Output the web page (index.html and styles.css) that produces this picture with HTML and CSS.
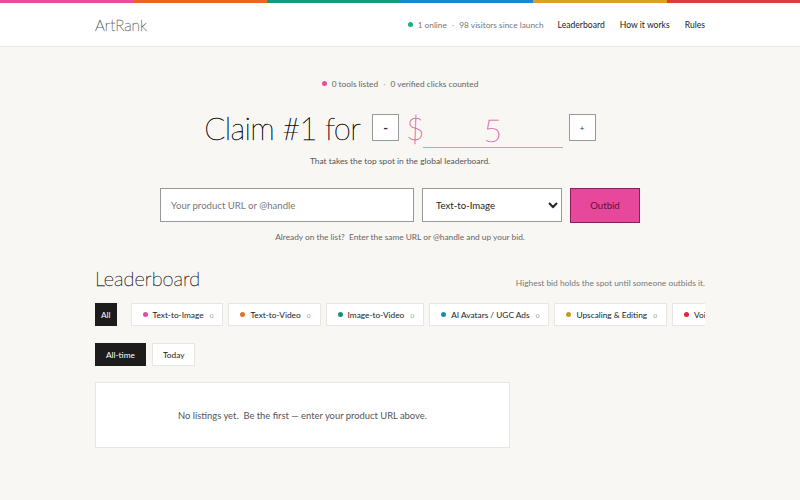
FILE: index.html
```html
<!DOCTYPE html>
<html lang="en">
<head>
    <meta charset="UTF-8">
    <meta name="viewport" content="width=device-width, initial-scale=1.0">
    <title>ArtRank</title>
    <link rel="stylesheet" href="styles.css">
</head>
<body>
    <div class="rainbow">
        <span class="c-pink"></span>
        <span class="c-orange"></span>
        <span class="c-teal"></span>
        <span class="c-blue"></span>
        <span class="c-gold"></span>
        <span class="c-red"></span>
    </div>

    <header>
        <div class="wrap header-inner">
            <div class="logo">ArtRank</div>
            <nav>
                <span class="presence"><i class="dot dot-green"></i>1 online <span class="sep">·</span> 98 visitors since launch</span>
                <a href="#">Leaderboard</a>
                <a href="#">How it works</a>
                <a href="#">Rules</a>
            </nav>
        </div>
    </header>

    <main class="wrap">
        <section class="hero">
            <p class="stats"><i class="dot dot-pink"></i>0 tools listed <span class="sep">·</span> 0 verified clicks counted</p>

            <div class="claim">
                <h1>Claim #1 for</h1>
                <button class="step">-</button>
                <span class="dollar">$</span>
                <input type="text" class="amount" value="5">
                <button class="step step-plus">+</button>
            </div>
            <p class="sub">That takes the top spot in the global leaderboard.</p>

            <form class="bid-form" onsubmit="return false">
                <input type="text" class="url-input" placeholder="Your product URL or @handle">
                <select class="cat-select">
                    <option selected>Text-to-Image</option>
                    <option>Text-to-Video</option>
                    <option>Image-to-Video</option>
                </select>
                <button class="outbid">Outbid</button>
            </form>
            <p class="hint">Already on the list?&nbsp; Enter the same URL or @handle and up your bid.</p>
        </section>

        <section class="board">
            <div class="board-head">
                <h2>Leaderboard</h2>
                <span class="board-note">Highest bid holds the spot until someone outbids it.</span>
            </div>

            <div class="chips">
                <button class="chip chip-all active">All</button>
                <button class="chip"><i class="dot dot-pink"></i>Text-to-Image <small>0</small></button>
                <button class="chip"><i class="dot dot-orange"></i>Text-to-Video <small>0</small></button>
                <button class="chip"><i class="dot dot-teal"></i>Image-to-Video <small>0</small></button>
                <button class="chip"><i class="dot dot-cyan"></i>AI Avatars / UGC Ads <small>0</small></button>
                <button class="chip"><i class="dot dot-gold"></i>Upscaling &amp; Editing <small>0</small></button>
                <button class="chip"><i class="dot dot-red"></i>Voice <small>0</small></button>
            </div>

            <div class="periods">
                <button class="chip active">All-time</button>
                <button class="chip">Today</button>
            </div>

            <div class="empty">No listings yet.&nbsp; Be the first — enter your product URL above.</div>
        </section>
    </main>
</body>
</html>
```

FILE: styles.css
```css
body {
    font-family: Lato, "Noto Sans", sans-serif;
    margin: 0;
    padding: 0;
    background-color: #f8f7f4;
    color: #222;
}

.wrap {
    width: 610px;
    margin: 0 auto;
}

/* полоска сверху */
.rainbow {
    display: flex;
    height: 3px;
}

.rainbow span {
    flex: 1;
}

.c-pink { background-color: #e84d9b; }
.c-orange { background-color: #e8661f; }
.c-teal { background-color: #17997e; }
.c-blue { background-color: #1c87c9; }
.c-gold { background-color: #d9a12a; }
.c-red { background-color: #de3b3b; }

header {
    background-color: #fff;
    border-bottom: 1px solid #ebe9e4;
}

.header-inner {
    height: 43px;
    display: flex;
    justify-content: space-between;
    align-items: center;
}

.logo {
    font-weight: 100;
    font-size: 15.5px;
    color: #444;
    -webkit-text-stroke: 0.3px #555;
}

nav {
    display: flex;
    align-items: center;
    gap: 15px;
    font-size: 8.6px;
}

nav a {
    color: #222;
    text-decoration: none;
}

.presence {
    color: #777;
    font-size: 8.3px;
    margin-right: -1px;
}

.sep {
    color: #aaa;
    margin: 0 3px;
}

.dot {
    display: inline-block;
    width: 5px;
    height: 5px;
    border-radius: 50%;
    margin-right: 5px;
    vertical-align: 1px;
}

.dot-green { background-color: #17b07e; }
.dot-pink { background-color: #e84d9b; }
.dot-orange { background-color: #e0712c; }
.dot-teal { background-color: #168f7a; }
.dot-cyan { background-color: #148fa6; }
.dot-gold { background-color: #c99a18; }
.dot-red { background-color: #d82a3a; }

/* верхний блок */
.hero {
    text-align: center;
    padding-top: 32px;
}

.stats {
    font-size: 8.3px;
    color: #666;
    margin: 0;
}

.claim {
    display: flex;
    justify-content: center;
    align-items: center;
    margin-top: 18px;
}

.claim h1 {
    font-weight: 100;
    font-size: 31px;
    letter-spacing: -0.7px;
    margin: 0 12px 0 0;
    color: #000;
    -webkit-text-stroke: 0.4px #000;
}

.step {
    width: 27px;
    height: 27px;
    padding: 0;
    border: 1px solid #999;
    background-color: #fff;
    font-family: inherit;
    font-size: 13px;
    font-weight: bold;
    color: #333;
    cursor: pointer;
}

.step-plus {
    font-size: 8px;
    font-weight: normal;
    margin-left: 6px;
}

.dollar {
    font-weight: 100;
    font-size: 32px;
    color: #e16aa8;
    -webkit-text-stroke: 0.4px #e16aa8;
    margin-left: 7px;
}

.amount {
    width: 140px;
    border: none;
    border-bottom: 1px solid #e88cbb;
    background: transparent;
    text-align: center;
    font-family: inherit;
    font-weight: 100;
    font-size: 32px;
    color: #e16aa8;
    -webkit-text-stroke: 0.4px #e16aa8;
    padding: 0;
    margin-top: 4px;
    margin-left: -2px;
    height: 36px;
    outline: none;
}

.sub {
    font-size: 8.4px;
    color: #555;
    margin: 8px 0 0;
}

.bid-form {
    display: flex;
    justify-content: center;
    gap: 8px;
    margin-top: 22px;
}

.url-input {
    width: 254px;
    height: 34px;
    box-sizing: border-box;
    border: 1px solid #999;
    padding: 0 10px;
    font-family: inherit;
    font-size: 9.6px;
}

.url-input::placeholder {
    color: #777;
}

.cat-select {
    width: 140px;
    height: 34px;
    border: 1px solid #999;
    border-radius: 0;
    background-color: #fff;
    padding: 0 9px;
    font-family: inherit;
    font-size: 9.6px;
    color: #222;
}

.outbid {
    width: 70px;
    height: 35px;
    border: 1px solid #8a2056;
    background-color: #e8489b;
    font-family: inherit;
    font-size: 9.6px;
    color: #5a1236;
    cursor: pointer;
}

.hint {
    font-size: 8.3px;
    color: #666;
    margin: 9px 0 0;
}

/* лидерборд */
.board {
    margin-top: 24px;
}

.board-head {
    display: flex;
    justify-content: space-between;
    align-items: baseline;
}

.board-head h2 {
    font-weight: 100;
    font-size: 20px;
    margin: 0;
    color: #111;
    -webkit-text-stroke: 0.35px #111;
}

.board-note {
    font-size: 8.4px;
    color: #777;
}

.chips {
    display: flex;
    gap: 5px;
    margin-top: 13px;
    overflow: hidden;
}

.chip {
    flex-shrink: 0;
    height: 23px;
    padding: 0 9px 0 11px;
    border: 1px solid #e8e6e1;
    background-color: #fff;
    font-family: inherit;
    font-size: 8.3px;
    color: #222;
    white-space: nowrap;
    cursor: pointer;
}

.chip small {
    font-size: 6.5px;
    color: #999;
    margin-left: 4px;
}

.chip.active {
    background-color: #1c1c1c;
    border-color: #1c1c1c;
    color: #fff;
}

.chip-all {
    padding: 0 5px;
    margin-right: 9px;
}

.periods {
    display: flex;
    gap: 6px;
    margin-top: 17px;
}

.periods .chip {
    padding: 0 10px;
}

.empty {
    width: 415px;
    height: 66px;
    box-sizing: border-box;
    margin-top: 16px;
    background-color: #fff;
    border: 1px solid #e8e6e1;
    display: flex;
    justify-content: center;
    align-items: center;
    font-size: 9.4px;
    color: #555;
}
```
